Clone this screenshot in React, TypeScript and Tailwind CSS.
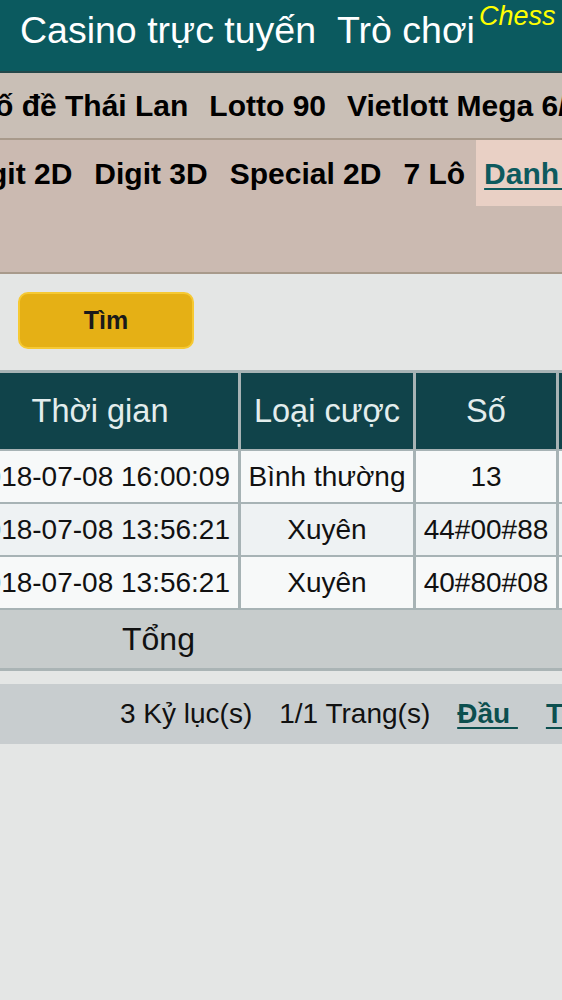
const rows = [
  { time: '2018-07-08 16:00:09', type: 'Bình thường', num: '13', bg: 'bg-[#f7f9f9]' },
  { time: '2018-07-08 13:56:21', type: 'Xuyên', num: '44#00#88', bg: 'bg-[#eef2f3]' },
  { time: '2018-07-08 13:56:21', type: 'Xuyên', num: '40#80#08', bg: 'bg-[#f7f9f9]' },
];

const gameTabs = ['Digit 2D', 'Digit 3D', 'Special 2D', '7 Lô'];

export default function App() {
  return (
    <div className="min-h-[1000px] w-[562px] overflow-hidden bg-[#e4e6e5] font-['Liberation_Sans',Arial,sans-serif]">
      {/* top bar */}
      <div className="flex h-[73px] items-start gap-[21px] whitespace-nowrap border-b-2 border-[#23474a] bg-[#0b5a5f] pl-[20px] text-white">
        <span className="mt-[12px] text-[37.5px] leading-none">Casino trực tuyến</span>
        <span className="flex items-start">
          <span className="mt-[12px] text-[37.5px] leading-none">Trò chơi</span>
          <span className="ml-[4px] mt-[3px] text-[27px] italic leading-none text-[#ffff00]">Chess</span>
        </span>
      </div>

      {/* lottery nav */}
      <div className="flex h-[67px] items-center gap-[21px] whitespace-nowrap border-b-2 border-[#a89a8b] bg-[#c9bfb6] text-[30px] font-bold text-black">
        <span className="-ml-[25px]">Số đề Thái Lan</span>
        <span>Lotto 90</span>
        <span>Vietlott Mega 6/45</span>
      </div>

      <div className="h-[134px] whitespace-nowrap border-b-2 border-[#a89a8b] bg-[#cbbab1]">
        <div className="flex h-[66px] items-stretch text-[30px] font-bold text-black">
          {gameTabs.map((tab, i) => (
            <span key={tab} className={`flex items-center px-[11px] ${i === 0 ? '-ml-[52px]' : ''}`}>
              {tab}
            </span>
          ))}
          <span className="flex items-center bg-[#e9d0c5] px-[8px] text-[#0d5a5e] underline decoration-2 underline-offset-[4px]">
            Danh sách
          </span>
        </div>
      </div>

      {/* search */}
      <div className="pl-[18px] pt-[18px]">
        <button className="h-[57px] w-[176px] rounded-[10px] border-2 border-[#f6c933] bg-[#e5b015] text-[25px] font-bold text-[#1a1a1a]">
          Tìm
        </button>
      </div>

      {/* result table */}
      <div className="mt-[21px] bg-[#a7b3b5] pt-[3px]">
        <div className="-ml-[38px] flex w-[760px] flex-col gap-[2px] whitespace-nowrap">
          <div className="grid h-[76px] grid-cols-[276px_172px_140px_160px] grid-rows-[76px] gap-[3px]">
            {['Thời gian', 'Loại cược', 'Số', 'Tiền cược'].map((h) => (
              <div key={h} className="flex items-center justify-center overflow-hidden bg-[#10434a] text-[32.5px] text-[#e3eded]">
                {h}
              </div>
            ))}
          </div>
          {rows.map((r, i) => (
            <div key={i} className="grid h-[51px] grid-cols-[276px_172px_140px_160px] grid-rows-[51px] gap-[3px] text-[28px] text-[#111]">
              <div className={`flex items-center justify-center ${r.bg}`}>{r.time}</div>
              <div className={`flex items-center justify-center ${r.bg}`}>{r.type}</div>
              <div className={`flex items-center justify-center ${r.bg}`}>{r.num}</div>
              <div className={`flex items-center justify-center ${r.bg}`}>10</div>
            </div>
          ))}
        </div>
        <div className="mt-[2px] flex h-[61px] items-center border-b-[3px] border-[#aab4b5] bg-[#c7cccc] pl-[122px] text-[32px] text-[#111]">
          Tổng
        </div>
      </div>

      {/* pagination */}
      <div className="mt-[13px] flex h-[60px] items-center whitespace-nowrap bg-[#c8cdcf] pl-[120px] text-[28px] text-[#111]">
        <span>3 Kỷ lục(s)</span>
        <span className="ml-[27px]">1/1 Trang(s)</span>
        <a className="ml-[27px] font-bold text-[#0c4f4f] underline decoration-2 underline-offset-[4px]">Đầu&nbsp;</a>
        <a className="ml-[28px] font-bold text-[#0c4f4f] underline decoration-2 underline-offset-[4px]">Trước</a>
      </div>
    </div>
  );
}
